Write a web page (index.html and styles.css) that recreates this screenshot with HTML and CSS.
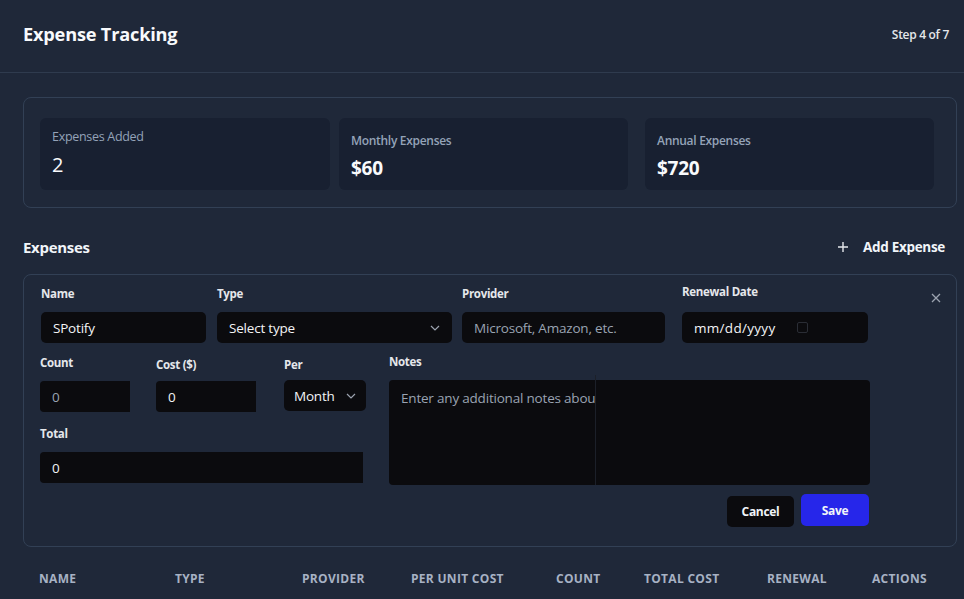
FILE: index.html
```html
<!DOCTYPE html>
<html lang="en">
<head>
<meta charset="utf-8">
<title>Expense Tracking</title>
<link rel="stylesheet" href="styles.css">
</head>
<body>
<header class="topbar">
  <h1 class="title">Expense Tracking</h1>
  <span class="step">Step 4 of 7</span>
</header>
<main class="main">
  <section class="stats">
    <div class="stat stat-first">
      <div class="stat-label">Expenses Added</div>
      <div class="stat-value stat-value-plain">2</div>
    </div>
    <div class="stat">
      <div class="stat-label">Monthly Expenses</div>
      <div class="stat-value">$60</div>
    </div>
    <div class="stat stat-last">
      <div class="stat-label">Annual Expenses</div>
      <div class="stat-value">$720</div>
    </div>
  </section>

  <div class="section-head">
    <h2 class="section-title">Expenses</h2>
    <button class="add-btn"><svg class="plus" viewBox="0 0 12 12" width="12" height="12"><path d="M6 1v10M1 6h10" stroke="#e5e7eb" stroke-width="1.4" fill="none"/></svg><span>Add Expense</span></button>
  </div>

  <section class="form-card">
    <button class="close" aria-label="Close"><svg viewBox="0 0 10 10" width="10" height="10"><path d="M1 1l8 8M9 1l-8 8" stroke="#9ca3af" stroke-width="1.3" fill="none"/></svg></button>
    <div class="row1">
      <div class="field f-name">
        <label class="label">Name</label>
        <div class="input">SPotify</div>
      </div>
      <div class="field f-type">
        <label class="label">Type</label>
        <div class="input select"><span>Select type</span><svg viewBox="0 0 10 6" width="10" height="6"><path d="M1 1l4 4 4-4" stroke="#9ca3af" stroke-width="1.2" fill="none"/></svg></div>
      </div>
      <div class="field f-provider">
        <label class="label">Provider</label>
        <div class="input placeholder">Microsoft, Amazon, etc.</div>
      </div>
      <div class="field f-date">
        <label class="label label-up">Renewal Date</label>
        <div class="input date"><span>mm/dd/yyyy</span><span class="cal"></span></div>
      </div>
    </div>
    <div class="row2">
      <div class="left">
        <div class="mini-row">
          <div class="field f-count">
            <label class="label">Count</label>
            <div class="input placeholder square-right">0</div>
          </div>
          <div class="field f-cost">
            <label class="label label-down">Cost ($)</label>
            <div class="input square-right">0</div>
          </div>
          <div class="field f-per">
            <label class="label label-down">Per</label>
            <div class="input select"><span>Month</span><svg viewBox="0 0 10 6" width="10" height="6"><path d="M1 1l4 4 4-4" stroke="#9ca3af" stroke-width="1.2" fill="none"/></svg></div>
          </div>
        </div>
        <div class="field f-total">
          <label class="label">Total</label>
          <div class="input square-right">0</div>
        </div>
      </div>
      <div class="field f-notes">
        <label class="label">Notes</label>
        <div class="textarea"><span class="placeholder-text">Enter any additional notes abou</span><span class="seam"></span></div>
      </div>
    </div>
    <div class="actions">
      <button class="btn cancel">Cancel</button>
      <button class="btn save">Save</button>
    </div>
  </section>

  <div class="table-head">
    <span>Name</span>
    <span>Type</span>
    <span>Provider</span>
    <span>Per Unit Cost</span>
    <span>Count</span>
    <span>Total Cost</span>
    <span>Renewal</span>
    <span>Actions</span>
  </div>
</main>
</body>
</html>
```
FILE: styles.css
```css
* { box-sizing: border-box; }
html, body { margin: 0; padding: 0; }
body {
  background: #1f2839;
  color: #f3f4f6;
  font-family: "Open Sans", "Noto Sans", "Liberation Sans", sans-serif;
  width: 964px;
  height: 599px;
  overflow: hidden;
}
button { font-family: inherit; cursor: pointer; }

.topbar {
  height: 73px;
  padding: 0 15px 0 23px;
  display: flex;
  align-items: center;
  justify-content: space-between;
  border-bottom: 1px solid #2f3b4e;
}
.title {
  margin: 0;
  font-size: 18.2px;
  font-weight: 700;
  color: #f8fafc;
  letter-spacing: -0.2px;
  position: relative;
  top: -2px;
}
.step {
  font-size: 12px;
  font-weight: 600;
  color: #e5e7eb;
  letter-spacing: -0.3px;
  position: relative;
  top: -2px;
}

.main { padding: 24px 7px 0 23px; }

.stats {
  height: 111px;
  border: 1px solid #324055;
  border-radius: 8px;
  padding: 20px 22px 0 16px;
  display: grid;
  grid-template-columns: 290px 289px 297px;
  column-gap: 9px;
}
.stat {
  height: 72px;
  background: #182031;
  border-radius: 6px;
  padding: 14px 12px 0 12px;
}
.stat-first { padding-top: 10px; }
.stat-last { margin-left: 8px; }
.stat-label {
  font-size: 12.5px;
  color: #94a3b8;
  letter-spacing: -0.3px;
  line-height: 17px;
}
.stat:not(.stat-first) .stat-label { font-weight: 600; font-size: 12px; }
.stat-value {
  font-size: 19px;
  font-weight: 700;
  color: #f8fafc;
  line-height: 26px;
  margin-top: 6px;
  letter-spacing: -0.3px;
}
.stat-value-plain { font-weight: 400; font-size: 20px; margin-top: 7px; }

.section-head {
  display: flex;
  align-items: center;
  justify-content: space-between;
  height: 30px;
  margin-top: 24px;
  margin-bottom: 12px;
  padding-right: 12px;
}
.section-title {
  margin: 0;
  font-size: 15px;
  font-weight: 700;
  letter-spacing: -0.3px;
  color: #f1f5f9;
}
.add-btn {
  background: none;
  border: 0;
  color: #f1f5f9;
  display: flex;
  align-items: center;
  gap: 14px;
  font-size: 13.5px;
  font-weight: 700;
  letter-spacing: -0.3px;
  padding: 0;
}

.form-card {
  position: relative;
  height: 273px;
  border: 1px solid #324055;
  border-radius: 8px;
  padding: 11px 16px 0 16px;
}
.close {
  position: absolute;
  top: 17px;
  right: 14px;
  background: none;
  border: 0;
  padding: 0;
  width: 12px;
  height: 12px;
  display: flex;
  align-items: center;
  justify-content: center;
}
.field { display: flex; flex-direction: column; }
.label {
  font-size: 11.5px;
  font-weight: 700;
  color: #e5e7eb;
  line-height: 16px;
  height: 16px;
  letter-spacing: -0.3px;
  margin-bottom: 10px;
}
.label-up { margin-top: -2px; margin-bottom: 12px; }
.label-down { margin-top: 2px; margin-bottom: 8px; }

.input {
  height: 31px;
  background: #0b0b0e;
  border-radius: 5px;
  padding: 0 12px;
  display: flex;
  align-items: center;
  font-size: 13.5px;
  color: #f3f4f6;
  letter-spacing: -0.2px;
}
.placeholder { color: #9aa3b2; }
.square-right { border-radius: 4px 0 0 4px; }
.select { justify-content: space-between; }

.row1 { display: flex; }
.f-name { width: 165px; margin-left: 1px; }
.f-type { width: 235px; margin-left: 11px; }
.f-provider { width: 203px; margin-left: 10px; }
.f-date { width: 186px; margin-left: 17px; }
.date { gap: 22px; }
.date span:first-child { letter-spacing: 0.3px; }
.cal {
  width: 11px;
  height: 11px;
  border: 1px solid #2a2d35;
  border-radius: 2px;
}

.row2 { display: flex; margin-top: 12px; }
.left { width: 326px; }
.mini-row { display: flex; }
.f-count { width: 90px; }
.f-cost { width: 100px; margin-left: 26px; }
.f-per { width: 82px; margin-left: 28px; }
.f-per .input { padding: 0 10px; font-size: 13.5px; }
.f-per .label-down { margin-bottom: 7px; }
.f-total { width: 323px; margin-top: 14px; }
.f-notes { width: 481px; margin-left: 23px; }
.f-notes .label { margin-top: -1px; margin-bottom: 10px; }
.textarea {
  position: relative;
  height: 105px;
  background: #0b0b0e;
  border-radius: 4px;
  padding: 9px 12px;
  font-size: 13.5px;
  letter-spacing: -0.2px;
}
.placeholder-text { color: #9aa3b2; }
.seam {
  position: absolute;
  left: 206px;
  top: -5px;
  bottom: 0;
  width: 1px;
  background: #1c2029;
}

.actions {
  display: flex;
  justify-content: flex-end;
  align-items: center;
  gap: 7px;
  width: 829px;
  margin-top: 8px;
}
.btn {
  border: 0;
  border-radius: 5px;
  font-size: 12px;
  font-weight: 700;
  color: #f1f5f9;
  letter-spacing: -0.3px;
}
.cancel { width: 67px; height: 31px; background: #0b0b0e; margin-top: 3px; }
.save { width: 68px; height: 32px; background: #2626ea; }

.table-head {
  display: grid;
  grid-template-columns: 136px 127px 109px 145px 88px 123px 105px auto;
  padding: 0 0 0 16px;
  margin-top: 23px;
  font-size: 12px;
  font-weight: 700;
  letter-spacing: 0.3px;
  text-transform: uppercase;
  color: #a7b2c4;
}
```
